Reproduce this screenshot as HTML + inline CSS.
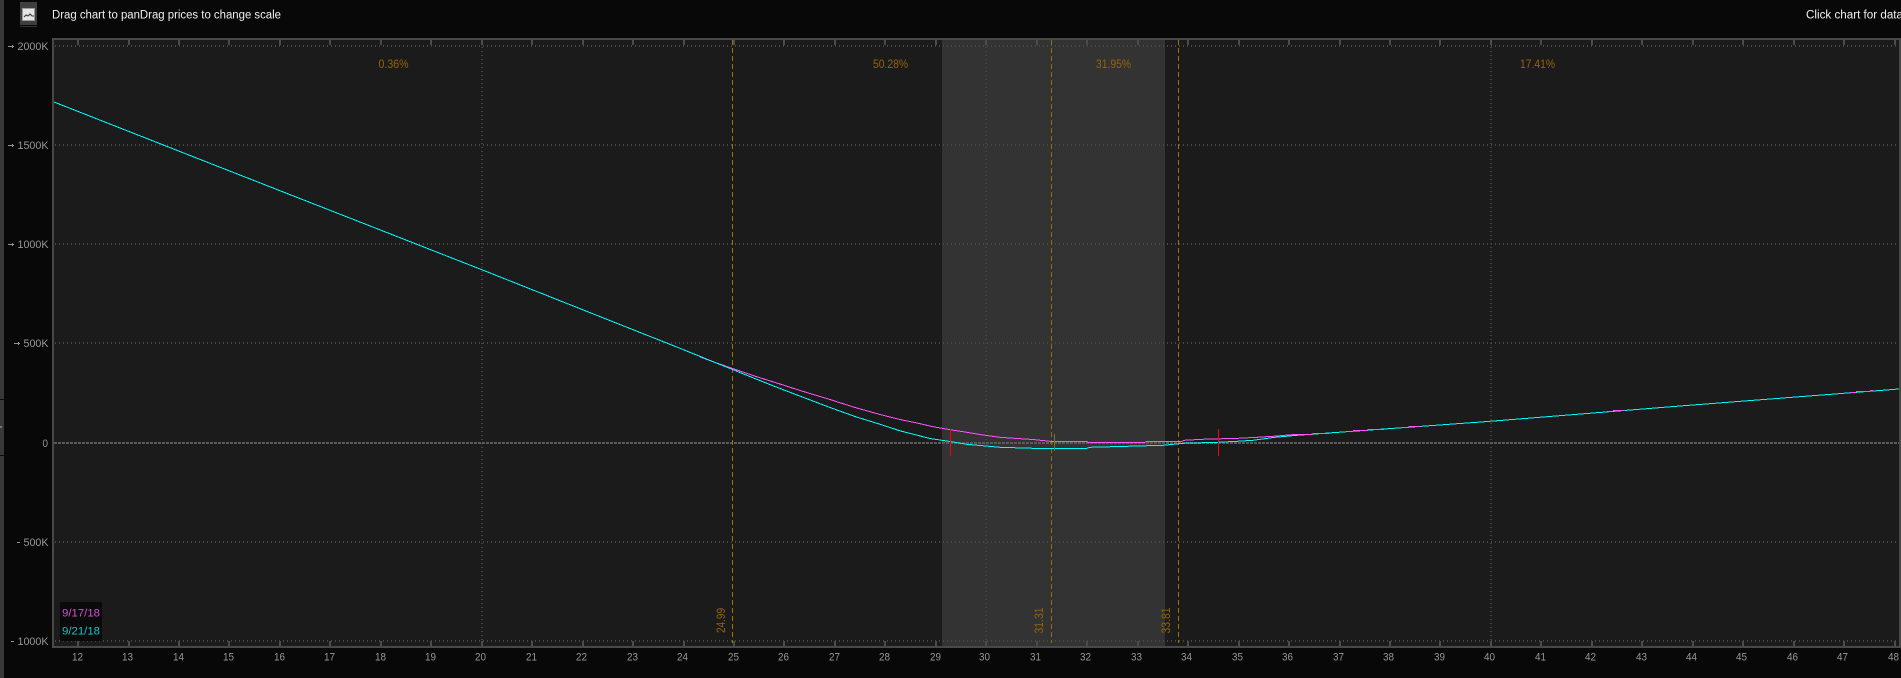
<!DOCTYPE html>
<html>
<head>
<meta charset="utf-8">
<style>
html,body{margin:0;padding:0;background:#080808;width:1901px;height:678px;overflow:hidden}
svg{display:block}
text{font-family:"Liberation Sans",sans-serif}
.a{font-size:11px;fill:#989898}
.p{font-size:11.5px;fill:#946408}
.h{font-size:11.5px;fill:#f0f0f0}
</style>
</head>
<body>
<svg width="1901" height="678" viewBox="0 0 1901 678" xmlns="http://www.w3.org/2000/svg">
<rect width="1901" height="678" fill="#080808"/>
<rect x="0" y="0" width="4" height="678" fill="#383838"/>
<rect x="0" y="399" width="4" height="1" fill="#0a0a0a"/>
<rect x="0" y="455" width="4" height="1" fill="#0a0a0a"/>
<rect x="0" y="426" width="2" height="2" fill="#777"/>

<!-- header icon -->
<rect x="20" y="2" width="17" height="23" fill="#3e3e3e"/>
<rect x="20" y="26" width="17" height="1" fill="#333"/>
<rect x="22" y="8" width="13" height="13" fill="#e4e4e4"/>
<rect x="22.5" y="8.5" width="12" height="12" fill="none" stroke="#9a9a9a" stroke-width="1" shape-rendering="crispEdges"/>
<path d="M24 17L26 15L28 16L30 14L32 16L34 16" fill="none" stroke="#333" stroke-width="1"/>
<text class="h" x="52" y="18.5" textLength="229" lengthAdjust="spacingAndGlyphs">Drag chart to panDrag prices to change scale</text>
<text class="h" x="1806" y="18.5" textLength="97" lengthAdjust="spacingAndGlyphs">Click chart for data</text>

<!-- chart frame -->
<rect x="52" y="38" width="1849" height="610" fill="#484848"/>
<rect x="54" y="40" width="1845" height="606" fill="#1b1b1b"/>
<rect x="942" y="40" width="223" height="606" fill="#333333"/>

<g shape-rendering="crispEdges" fill="none">
<!-- ticks -->
<path stroke="#4c4c4c" stroke-width="2" d="M78 40V45M129 40V45M179 40V45M229 40V45M280 40V45M330 40V45M381 40V45M431 40V45M482 40V45M532 40V45M583 40V45M633 40V45M684 40V45M734 40V45M784 40V45M835 40V45M885 40V45M936 40V45M986 40V45M1037 40V45M1087 40V45M1138 40V45M1188 40V45M1239 40V45M1289 40V45M1340 40V45M1390 40V45M1440 40V45M1491 40V45M1541 40V45M1592 40V45M1642 40V45M1693 40V45M1743 40V45M1794 40V45M1844 40V45M1895 40V45"/>
<path stroke="#4c4c4c" stroke-width="2" d="M78 641V646M129 641V646M179 641V646M229 641V646M280 641V646M330 641V646M381 641V646M431 641V646M482 641V646M532 641V646M583 641V646M633 641V646M684 641V646M734 641V646M784 641V646M835 641V646M885 641V646M936 641V646M986 641V646M1037 641V646M1087 641V646M1138 641V646M1188 641V646M1239 641V646M1289 641V646M1340 641V646M1390 641V646M1440 641V646M1491 641V646M1541 641V646M1592 641V646M1642 641V646M1693 641V646M1743 641V646M1794 641V646M1844 641V646M1895 641V646"/>
<!-- horizontal dotted grid -->
<path stroke="#484848" stroke-width="2" stroke-dasharray="1 3" d="M55 46H1899M55 145H1899M55 244H1899M55 343H1899M55 542H1899M55 641H1899"/>
<!-- vertical dotted grid -->
<path stroke="#444" stroke-width="2" stroke-dasharray="1 3" d="M482 47V640M986 47V640M1491 47V640"/>
<!-- zero line -->
<path stroke="#5a5a5a" stroke-width="2" stroke-dasharray="3 1" d="M54 443H1899"/>
<!-- orange dashed verticals -->
<path stroke="#a56e00" stroke-width="1" stroke-dasharray="5 3" d="M732.5 40V643M1178.5 40V643"/>
<path stroke="#956a14" stroke-width="1" stroke-dasharray="5 3" d="M1051.5 40V643"/>
<!-- magenta curve -->
<polyline stroke="#ff55ff" stroke-width="1" points="700,357 713,361.7 732,368.3 756,376.5 780,384 805,392 830,399.5 855,407.5 880,414.5 900,419.5 917,423 933,426.7 950,429.7 967,432.3 983,435 1000,437.3 1017,438.5 1033,439.5 1050,441.3 1087,441.3 1088,442.3 1145,442.3 1147,441.3 1182,441.3 1184,440.3 1202,439.3 1238,438.3 1257,437.3 1273,436.3 1297,434.3"/>
<!-- cyan curve -->
<polyline stroke="#00ffff" stroke-width="1" points="54,102 199,159 480,269 680,348.3 732,369.3 756,379 780,388.5 805,398 830,407.5 855,416.5 880,424.3 900,430.8 930,438.5 950,441.5 967,444.3 1000,447.3 1033,448.3 1087,448.3 1090,447.3 1127,446.3 1163,445.3 1183,443.3 1217,442.3 1237,441.3 1253,440.3 1275,437.3 1297,435.3 1485,421.7 1680,406 1899,389"/>
<path stroke="#ff55ff" stroke-width="1" d="M1294 434.5H1313M1313 433.5H1329M1347 431.5H1353M1353 430.5H1368M1368 429.5H1384M1402 427.5H1409M1409 426.5H1421M1607 411.5H1613M1613 410.5H1625M1850 392.5H1856M1856 391.5H1870M1870 390.5H1873"/>
<!-- red markers -->
<path stroke="#ff0000" stroke-width="1" d="M950.5 429V456M1218.5 429V456"/>
<path stroke="#7d6c42" stroke-width="1" d="M1054.5 434V451"/>
<!-- y axis minus/plus marks -->
<path stroke="#909090" stroke-width="1" d="M8 46.5H14M12.5 45V48M8 145.5H14M12.5 144V147M8 244.5H14M12.5 243V246M14 343.5H20M18.5 342V345M17 542.5H20M11 641.5H14"/>
</g>

<!-- percent labels -->
<text class="p" x="378.5" y="68" textLength="30" lengthAdjust="spacingAndGlyphs">0.36%</text>
<text class="p" x="873" y="68" textLength="35" lengthAdjust="spacingAndGlyphs">50.28%</text>
<text class="p" x="1096" y="68" textLength="35" lengthAdjust="spacingAndGlyphs">31.95%</text>
<text class="p" x="1520" y="68" textLength="35" lengthAdjust="spacingAndGlyphs">17.41%</text>

<!-- vertical labels -->
<text class="p" transform="translate(725 633) rotate(-90)" textLength="25" lengthAdjust="spacingAndGlyphs">24.99</text>
<text class="p" transform="translate(1043 633.5) rotate(-90)" textLength="26" lengthAdjust="spacingAndGlyphs">31.31</text>
<text class="p" transform="translate(1170 633.5) rotate(-90)" textLength="26" lengthAdjust="spacingAndGlyphs">33.81</text>

<!-- y labels -->
<text class="a" x="17.5" y="50" textLength="31" lengthAdjust="spacingAndGlyphs">2000K</text>
<text class="a" x="17.5" y="149" textLength="31" lengthAdjust="spacingAndGlyphs">1500K</text>
<text class="a" x="17.5" y="248" textLength="31" lengthAdjust="spacingAndGlyphs">1000K</text>
<text class="a" x="23.5" y="347" textLength="25" lengthAdjust="spacingAndGlyphs">500K</text>
<text class="a" x="42.5" y="447" textLength="5.5" lengthAdjust="spacingAndGlyphs">0</text>
<text class="a" x="23.5" y="546" textLength="25" lengthAdjust="spacingAndGlyphs">500K</text>
<text class="a" x="17.5" y="645" textLength="31" lengthAdjust="spacingAndGlyphs">1000K</text>

<!-- legend -->
<rect x="60" y="602" width="42" height="39" rx="2" fill="#0a0a0a"/>
<text x="62" y="616.5" font-size="11" fill="#d84fd8" textLength="38" lengthAdjust="spacingAndGlyphs">9/17/18</text>
<text x="62" y="634.7" font-size="11" fill="#10c8c8" textLength="38" lengthAdjust="spacingAndGlyphs">9/21/18</text>

<!-- x labels -->
<g class="x">
<text class="a" x="72" y="660.5" textLength="11" lengthAdjust="spacingAndGlyphs">12</text>
<text class="a" x="122" y="660.5" textLength="11" lengthAdjust="spacingAndGlyphs">13</text>
<text class="a" x="173" y="660.5" textLength="11" lengthAdjust="spacingAndGlyphs">14</text>
<text class="a" x="223" y="660.5" textLength="11" lengthAdjust="spacingAndGlyphs">15</text>
<text class="a" x="274" y="660.5" textLength="11" lengthAdjust="spacingAndGlyphs">16</text>
<text class="a" x="324" y="660.5" textLength="11" lengthAdjust="spacingAndGlyphs">17</text>
<text class="a" x="375" y="660.5" textLength="11" lengthAdjust="spacingAndGlyphs">18</text>
<text class="a" x="425" y="660.5" textLength="11" lengthAdjust="spacingAndGlyphs">19</text>
<text class="a" x="475" y="660.5" textLength="11" lengthAdjust="spacingAndGlyphs">20</text>
<text class="a" x="526" y="660.5" textLength="11" lengthAdjust="spacingAndGlyphs">21</text>
<text class="a" x="576" y="660.5" textLength="11" lengthAdjust="spacingAndGlyphs">22</text>
<text class="a" x="627" y="660.5" textLength="11" lengthAdjust="spacingAndGlyphs">23</text>
<text class="a" x="677" y="660.5" textLength="11" lengthAdjust="spacingAndGlyphs">24</text>
<text class="a" x="728" y="660.5" textLength="11" lengthAdjust="spacingAndGlyphs">25</text>
<text class="a" x="778" y="660.5" textLength="11" lengthAdjust="spacingAndGlyphs">26</text>
<text class="a" x="829" y="660.5" textLength="11" lengthAdjust="spacingAndGlyphs">27</text>
<text class="a" x="879" y="660.5" textLength="11" lengthAdjust="spacingAndGlyphs">28</text>
<text class="a" x="930" y="660.5" textLength="11" lengthAdjust="spacingAndGlyphs">29</text>
<text class="a" x="979" y="660.5" textLength="11" lengthAdjust="spacingAndGlyphs">30</text>
<text class="a" x="1030" y="660.5" textLength="11" lengthAdjust="spacingAndGlyphs">31</text>
<text class="a" x="1080" y="660.5" textLength="11" lengthAdjust="spacingAndGlyphs">32</text>
<text class="a" x="1131" y="660.5" textLength="11" lengthAdjust="spacingAndGlyphs">33</text>
<text class="a" x="1181" y="660.5" textLength="11" lengthAdjust="spacingAndGlyphs">34</text>
<text class="a" x="1232" y="660.5" textLength="11" lengthAdjust="spacingAndGlyphs">35</text>
<text class="a" x="1282" y="660.5" textLength="11" lengthAdjust="spacingAndGlyphs">36</text>
<text class="a" x="1333" y="660.5" textLength="11" lengthAdjust="spacingAndGlyphs">37</text>
<text class="a" x="1383" y="660.5" textLength="11" lengthAdjust="spacingAndGlyphs">38</text>
<text class="a" x="1434" y="660.5" textLength="11" lengthAdjust="spacingAndGlyphs">39</text>
<text class="a" x="1484" y="660.5" textLength="11" lengthAdjust="spacingAndGlyphs">40</text>
<text class="a" x="1535" y="660.5" textLength="11" lengthAdjust="spacingAndGlyphs">41</text>
<text class="a" x="1585" y="660.5" textLength="11" lengthAdjust="spacingAndGlyphs">42</text>
<text class="a" x="1636" y="660.5" textLength="11" lengthAdjust="spacingAndGlyphs">43</text>
<text class="a" x="1686" y="660.5" textLength="11" lengthAdjust="spacingAndGlyphs">44</text>
<text class="a" x="1736" y="660.5" textLength="11" lengthAdjust="spacingAndGlyphs">45</text>
<text class="a" x="1787" y="660.5" textLength="11" lengthAdjust="spacingAndGlyphs">46</text>
<text class="a" x="1837" y="660.5" textLength="11" lengthAdjust="spacingAndGlyphs">47</text>
<text class="a" x="1888" y="660.5" textLength="11" lengthAdjust="spacingAndGlyphs">48</text>
</g>
</svg>
</body>
</html>
